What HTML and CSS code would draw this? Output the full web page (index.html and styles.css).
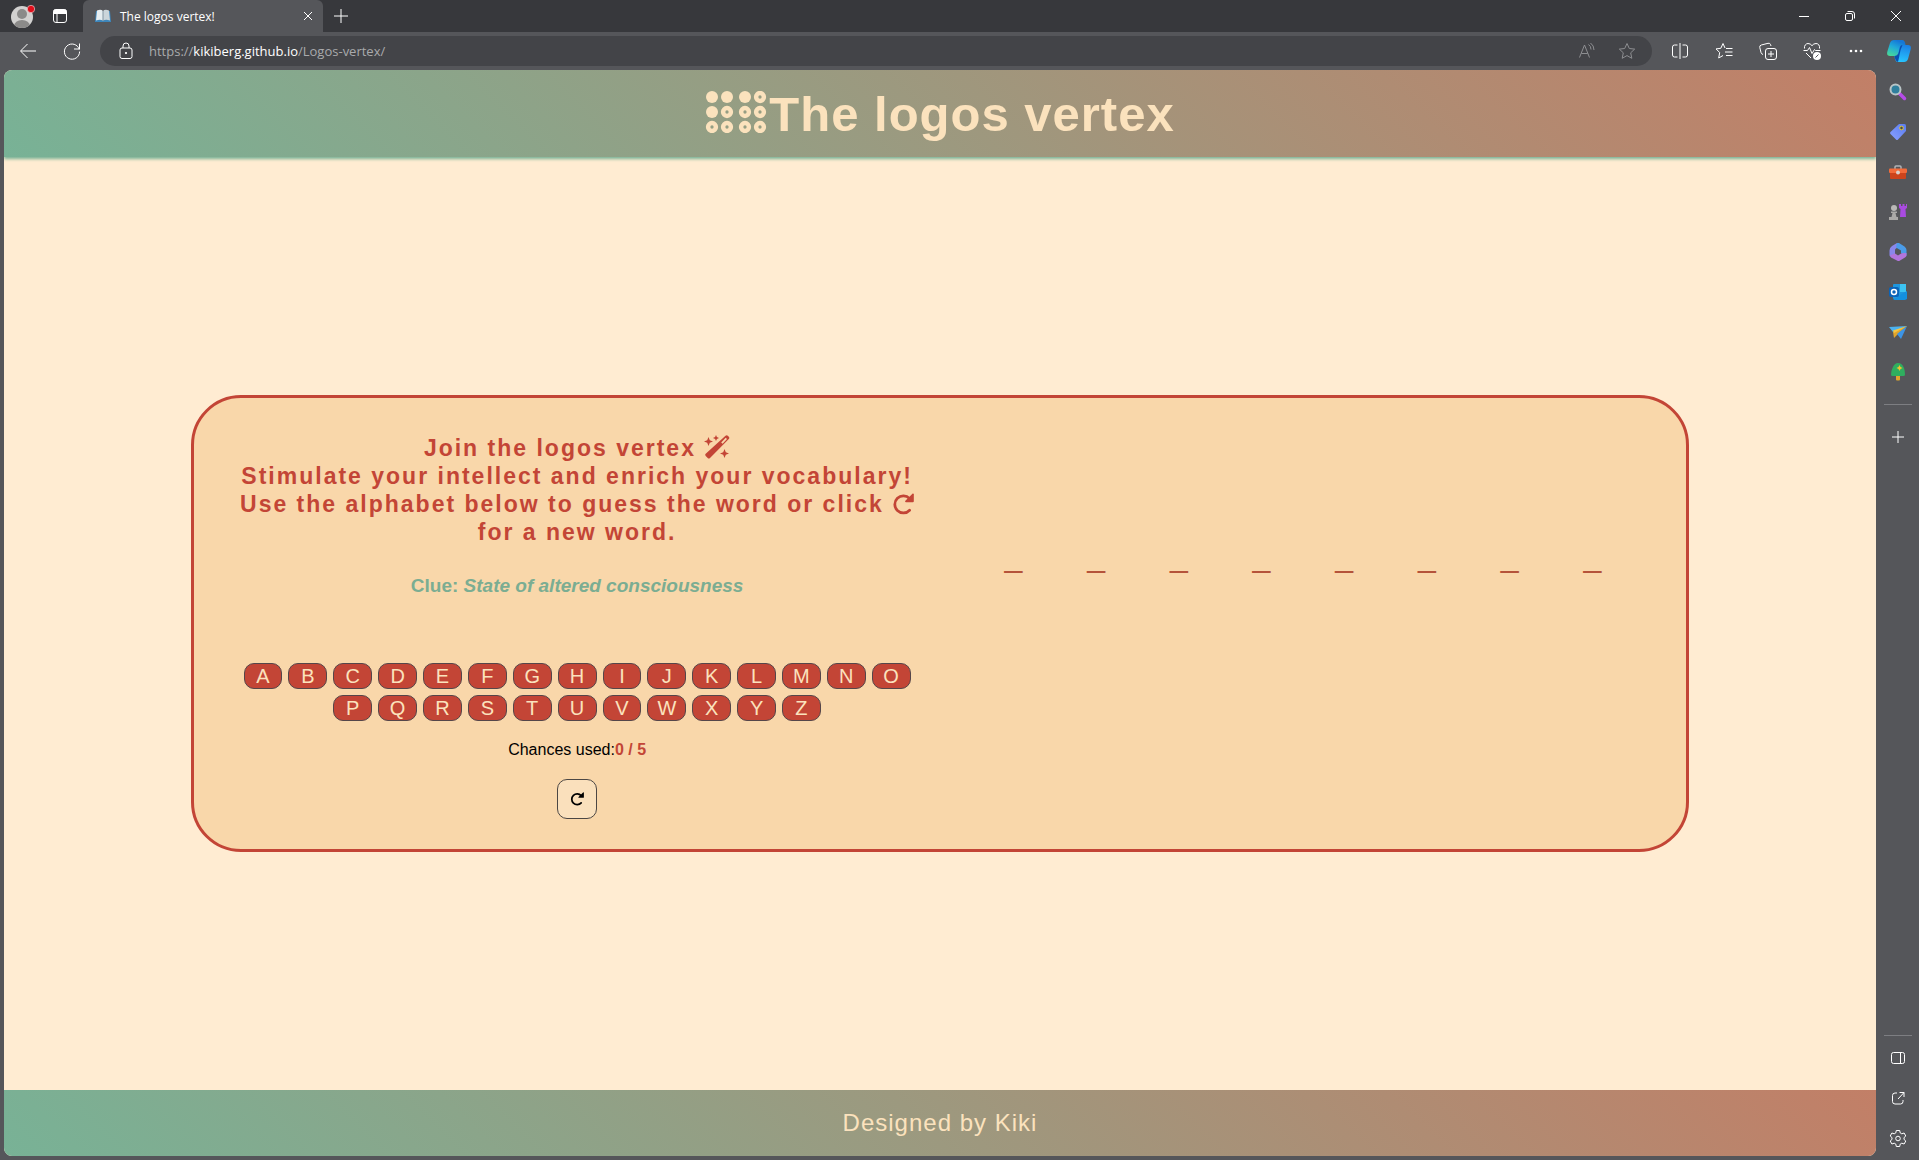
FILE: index.html
```html
<!DOCTYPE html>
<html lang="en">
<head>
<meta charset="utf-8">
<meta name="viewport" content="width=device-width, initial-scale=1">
<title>The logos vertex!</title>
<link rel="stylesheet" href="styles.css">
</head>
<body>
<svg class="defs" aria-hidden="true">
  <defs>
    <symbol id="rotate" viewBox="0 0 24 24">
      <path d="M19.2 6.200A9.300 9.300 0 1 0 19.200 18.800" fill="none" stroke="currentColor" stroke-width="3" stroke-linecap="round"/>
      <path d="M22.300 .8c.6-.6 1.500-.2 1.500.6v7.600c0 .6-.4 1-1 1h-7.600c-.9 0-1.200-.9-.6-1.500z" fill="currentColor"/>
    </symbol>
  </defs>
</svg>

<div class="tabbar">
  <button class="profile" aria-label="Profile">
    <svg width="26" height="26" viewBox="0 0 26 26"><defs><clipPath id="av"><circle cx="12" cy="14" r="11"/></clipPath></defs><circle cx="12" cy="14" r="11" fill="#d2d1d0"/><g clip-path="url(#av)" fill="#8b8a89"><circle cx="12" cy="11" r="5"/><ellipse cx="12" cy="23" rx="8" ry="6"/></g><circle cx="21" cy="6" r="3.700" fill="#e10f1b" stroke="#e8e4e4" stroke-width=".6"/></svg>
  </button>
  <button class="workspaces" aria-label="Tab actions">
    <svg class="line" width="16" height="16" viewBox="0 0 16 16"><rect x="1.500" y="1.500" width="13" height="13" rx="2.500"/><path d="M2 2h12v3.500H2z" fill="#fff"/><path d="M5 5v9"/></svg>
  </button>
  <div class="tab">
    <svg width="16" height="14" viewBox="0 0 16 14"><path d="M1 2h14l1 11H0z" fill="#3d86bb"/><path d="M2 1.500Q6 0 8 2v9.500Q5 10 1 11.500z" fill="#e6edf0"/><path d="M14 1.500Q10 0 8 2v9.500Q11 10 15 11.500z" fill="#cbd5da"/><path d="M8 2v10" stroke="#8194a0"/></svg>
    <span class="tab-title">The logos vertex!</span>
    <button aria-label="Close tab"><svg class="line" width="10" height="10" viewBox="0 0 10 10"><path d="M1 1l8 8M9 1L1 9"/></svg></button>
  </div>
  <button class="newtab" aria-label="New tab"><svg class="line" width="14" height="14" viewBox="0 0 14 14"><path d="M7 0v14M0 7h14"/></svg></button>
  <div class="window-controls">
    <button aria-label="Minimise"><svg class="line" width="10" height="10" viewBox="0 0 10 10"><path d="M0 5.500h10"/></svg></button>
    <button aria-label="Restore"><svg class="line" width="10" height="10" viewBox="0 0 10 10"><rect x=".5" y="2.500" width="7" height="7" rx="1.500"/><path d="M2.500 .5H7q2.500 0 2.500 2.500v4.500"/></svg></button>
    <button aria-label="Close"><svg class="line" width="10" height="10" viewBox="0 0 10 10"><path d="M0 0l10 10M10 0L0 10"/></svg></button>
  </div>
</div>

<div class="toolbar">
  <button aria-label="Back"><svg class="line" width="18" height="18" viewBox="0 0 18 18"><path d="M17 9H2M8.500 2L1.500 9l7 7"/></svg></button>
  <button aria-label="Refresh"><svg class="line" width="18" height="18" viewBox="0 0 18 18"><path d="M16.300 7.500A7.600 7.600 0 1 0 16.600 9.500M16.500 1.500v5.500h-5.500"/></svg></button>
  <div class="address">
    <svg class="line" width="14" height="18" viewBox="0 0 14 18"><rect x="1" y="6" width="12" height="10.500" rx="2"/><path d="M4 6V4a3 3 0 0 1 6 0v2"/><circle cx="7" cy="11" r=".7" fill="#fff"/></svg>
    <div class="url">https://<b>kikiberg.github.io</b>/Logos-vertex/</div>
    <button aria-label="Read aloud"><svg class="line dim" width="18" height="18" viewBox="0 0 18 18"><path d="M1.500 15.500L6.500 3l5 12.500M3.300 11.500h6.500M10.500 2.500q2.500 1.500 2.500 5M12.500 1q3.500 2.500 3.500 7"/></svg></button>
    <button aria-label="Add to favourites"><svg class="line dim" width="18" height="18" viewBox="0 0 18 18"><path d="M9 1.500l2.300 5 5.400.6-4 3.700 1.100 5.500L9 13.600l-4.800 2.700 1.100-5.500-4-3.700 5.400-.6z"/></svg></button>
  </div>
  <button aria-label="Split screen"><svg class="line" width="18" height="18" viewBox="0 0 18 18"><path d="M9 1v16M6.500 3H3.500q-2 0-2 2v8q0 2 2 2h3M11.500 3h3q2 0 2 2v8q0 2-2 2h-3"/></svg></button>
  <button aria-label="Favourites"><svg class="line" width="18" height="18" viewBox="0 0 18 18"><path d="M10 6L8 1.500 5.800 6.300l-4.800.6 3.700 3.600-1 5.500 4.300-2.500M11 6.500h6.500M10 10h7.500M11 13.500h6.500"/></svg></button>
  <button aria-label="Collections"><svg class="line" width="18" height="18" viewBox="0 0 18 18"><rect x="6.500" y="6.500" width="11" height="11" rx="2.500"/><path d="M12 9v6M9 12h6M4 12.500q-1.500-.4-2-2L.8 5.500Q.3 3.500 2.300 3L9 1.300q2-.5 2.600 1.400l.4 1.300"/></svg></button>
  <button aria-label="Browser essentials"><svg class="line" width="18" height="18" viewBox="0 0 18 18"><path d="M1.500 6.500C1 3.500 3 1.500 5 1.500q2.500 0 4 2.200 1.500-2.200 4-2.200c2.500 0 4 2.300 3.500 5M.5 8.500h4l2-3 2.500 6 2.500-4 1 1h5M3 11l5 5"/><circle cx="14" cy="14" r="4" fill="#fff" stroke="none"/><path d="M12.500 15.500l3-3" stroke="#55565a"/></svg></button>
  <button aria-label="Settings and more"><svg width="14" height="4" viewBox="0 0 14 4" fill="#fff"><circle cx="2" cy="2" r="1.300"/><circle cx="7" cy="2" r="1.300"/><circle cx="12" cy="2" r="1.300"/></svg></button>
  <button class="copilot" aria-label="Copilot"><svg width="24" height="24" viewBox="0 0 24 24"><defs><linearGradient id="c1" x1="0" y1="1" x2=".5" y2="0"><stop offset="0" stop-color="#4ee08f"/><stop offset=".6" stop-color="#20a9d8"/><stop offset="1" stop-color="#1577d8"/></linearGradient><linearGradient id="c2" x1=".5" y1="1" x2=".7" y2="0"><stop offset="0" stop-color="#27c4ff"/><stop offset="1" stop-color="#1b7fe4"/></linearGradient></defs><path d="M7 1h8q3 0 3.500 5H15l-4 9q-.5 2-3 2H3q-4 0-2.500-5L3 4q1-3 4-3z" fill="url(#c1)"/><path d="M15 6h6q4 0 2.500 5L21 20q-1 3-4 3h-6q-3 0-3.500-6l3-.5 2-8Q13 6 15 6z" fill="url(#c2)"/><path d="M7.500 17q3 0 4-3l1.500-6q.5-2 2.500-2-2 4-3 10-.5 3-1.500 7-3-1-3.500-6z" fill="#0b4fae"/></svg></button>
</div>

<div class="viewport">
  <div class="page">
    <header class="site-header">
      <svg class="braille" width="64" height="42" viewBox="0 0 64 42"><g fill="#fbe2bd"><circle cx="7" cy="6" r="6"/><circle cx="22" cy="6" r="6"/><circle cx="7" cy="21" r="6"/><circle cx="40" cy="6" r="6"/></g><g fill="none" stroke="#fbe2bd" stroke-width="4.500"><circle cx="55" cy="6" r="3.900"/><circle cx="22" cy="21" r="3.900"/><circle cx="40" cy="21" r="3.900"/><circle cx="55" cy="21" r="3.900"/><circle cx="7" cy="36" r="3.900"/><circle cx="22" cy="36" r="3.900"/><circle cx="40" cy="36" r="3.900"/><circle cx="55" cy="36" r="3.900"/></g></svg>
      <h1>The logos vertex</h1>
    </header>

    <main>
      <section class="game">
        <div class="panel">
          <h2>Join the logos vertex
            <svg class="wand" width="26" height="24" viewBox="0 0 26 24" fill="currentColor"><path fill-rule="evenodd" d="M21.500.8q1.200-1 2.300 0l1 1q1 1.200 0 2.300L6 23q-1.200 1-2.300 0l-2-2q-1-1.200 0-2.300zM17.200 7.400l1.400 1.400 4.400-4.700-1.300-1.400z"/><path d="M4.500 2l1.300 3.200L9 6.500 5.800 7.800 4.500 11 3.200 7.800 0 6.500l3.200-1.300zM12 0l.9 2.100 2.100.9-2.100.9L12 6l-.9-2.100L9 3l2.100-.9zM20.500 14l1.300 3.200 3.200 1.300-3.200 1.300-1.300 3.200-1.300-3.200-3.200-1.300 3.200-1.300z"/></svg><br>
            Stimulate your intellect and enrich your vocabulary!<br>
            Use the alphabet below to guess the word or click
            <svg class="turn" width="22" height="22"><use href="#rotate"/></svg>
            for a new word.</h2>
          <h3>Clue: <i>State of altered consciousness</i></h3>
          <div class="letters">
            <button>A</button><button>B</button><button>C</button><button>D</button><button>E</button>
            <button>F</button><button>G</button><button>H</button><button>I</button><button>J</button>
            <button>K</button><button>L</button><button>M</button><button>N</button><button>O</button>
            <button class="row-start">P</button><button>Q</button><button>R</button><button>S</button><button>T</button>
            <button>U</button><button>V</button><button>W</button><button>X</button><button>Y</button>
            <button>Z</button>
          </div>
          <p class="chances">Chances used:<b>0 / 5</b></p>
          <button class="refresh" aria-label="New word"><svg width="14" height="14"><use href="#rotate"/></svg></button>
        </div>
        <div class="word">
          <span>_</span><span>_</span><span>_</span><span>_</span><span>_</span><span>_</span><span>_</span><span>_</span>
        </div>
      </section>
    </main>

    <footer class="site-footer">Designed by Kiki</footer>
  </div>

  <aside class="sidebar">
    <button aria-label="Search"><svg width="18" height="18" viewBox="0 0 18 18"><path d="M10.500 10.500l5 5" stroke="#b54be8" stroke-width="3.500" stroke-linecap="round"/><circle cx="6.500" cy="6.500" r="5" fill="#2f7f9d" stroke="#b9c4c6" stroke-width="2"/></svg></button>
    <button aria-label="Shopping"><svg width="18" height="18" viewBox="0 0 18 18"><defs><linearGradient id="tg" x1="1" y1="0" x2="0" y2="1"><stop offset="0" stop-color="#5a7df0"/><stop offset="1" stop-color="#8aa0ff"/></linearGradient></defs><path d="M10 1h5.500q1.500 0 1.500 1.500v5.500L9 16.500q-1 1-2 0L1.500 11q-1-1 0-2z" fill="url(#tg)"/><circle cx="12.500" cy="5" r="1.800" fill="#3d4a58" stroke="#e9c62a"/></svg></button>
    <button aria-label="Tools"><svg width="18" height="18" viewBox="0 0 18 18"><path d="M6 6V4q0-1 1-1h4q1 0 1 1v2" fill="none" stroke="#b0b3b6" stroke-width="1.500"/><rect x="0" y="5.500" width="18" height="4.500" rx="1" fill="#f26b3a"/><path d="M1 10h16v5q0 1-1 1H2q-1 0-1-1z" fill="#cc441c"/><circle cx="9" cy="9.500" r="2" fill="#d9d2cd"/></svg></button>
    <button aria-label="Games"><svg width="18" height="18" viewBox="0 0 18 18"><path d="M10 1h2v2h1.500V1h2v2H17V1h1v4l-1.500 1 .5 8h-6l.5-8L10 5z" fill="#a94be0"/><circle cx="5" cy="5" r="3" fill="#b9b8b6"/><path d="M2 8.500h6v1.500H6.500l1 4h1.500V17H0v-3h2.500l1-4H2z" fill="#aaa9a7"/></svg></button>
    <button aria-label="Microsoft 365"><svg width="18" height="18" viewBox="0 0 18 18"><path d="M8 0L3 3Q.5 4.500.5 7.500V12q0 1 1 1.500L6 11V7q0-1 1-1.500L12 2.500z" fill="#8a86ea"/><path d="M8 0q1-.5 2 0l5.500 3.500Q17.500 5 17.500 7v6L12 10V7.500L7 4.500z" fill="#4b9ce8"/><path d="M.8 12.500L6 10.500l3 2 3.500-2.200 5-.3v2q0 1.500-1.500 2.500l-5 3q-1.500 1-3 0L2 14.500z" fill="#b275dc"/></svg></button>
    <button aria-label="Outlook"><svg width="18" height="18" viewBox="0 0 18 18"><rect x="4" y="1" width="13" height="15" rx="1" fill="#1f97de"/><path d="M11 1h6v8h-6z" fill="#3cc3f2"/><path d="M4 17h12l2-1V8l-7 4z" fill="#1490df"/><rect x="0" y="4" width="10" height="10" rx="2" fill="#0a63b8"/><circle cx="5" cy="9" r="2.500" fill="none" stroke="#fff" stroke-width="1.500"/></svg></button>
    <button aria-label="Drop"><svg width="18" height="18" viewBox="0 0 18 18"><path d="M0 4L18 3 4 9z" fill="#4cb2ef"/><path d="M18 3L4 9l1 6 4-4z" fill="#e0a52c"/><path d="M18 3l-6 13-4-5z" fill="#3c94e6"/><path d="M18 3L4 7.500 5 10z" fill="#f4c544"/></svg></button>
    <button aria-label="Tree"><svg width="18" height="18" viewBox="0 0 18 18"><rect x="7" y="12" width="4" height="5.500" rx="1" fill="#e0a52c"/><path d="M9 0q4 0 6 5 1 3 1 6.500 0 1.500-1.500 1.500h-11Q2 13 2 11.500 2 8 3.500 5 5.500 0 9 0z" fill="#2fae5f"/><path d="M10.500 2l1 2 2 1-2 1-1 2-1-2-2-1 2-1z" fill="#f2c431"/></svg></button>
    <hr>
    <button class="add" aria-label="Customise"><svg class="line" width="12" height="12" viewBox="0 0 12 12"><path d="M6 0v12M0 6h12"/></svg></button>
    <div class="spacer"></div>
    <hr>
    <button aria-label="Hide sidebar"><svg class="line" width="16" height="16" viewBox="0 0 16 16"><rect x="1.500" y="2.500" width="13" height="11" rx="2"/><path d="M10.500 2.500v11"/></svg></button>
    <button aria-label="Open link"><svg class="line" width="16" height="16" viewBox="0 0 16 16"><path d="M7 3H5Q2.500 3 2.500 5.500v6Q2.500 14 5 14h5.500q2.500 0 2.500-2.500V10M8 9l6-6.500M9.500 2.500h4.500V7"/></svg></button>
    <button aria-label="Settings"><svg class="line" width="18" height="18" viewBox="0 0 18 18"><path d="M7.300 1.500h3.400l.5 2.400 1.600.9 2.300-.8 1.700 3-1.800 1.600v1.800l1.800 1.600-1.700 3-2.300-.8-1.600.9-.5 2.400H7.300l-.5-2.400-1.600-.9-2.300.8-1.700-3L3 10.400V8.600L1.200 7l1.700-3 2.300.8 1.600-.9z"/><circle cx="9" cy="9.500" r="2.300"/></svg></button>
  </aside>
</div>
</body>
</html>
```
FILE: styles.css
```css
* {
  box-sizing: border-box;
}

:root {
  --frame: #55565a;
  --red: #c34536;
  --cream: #fbe2bd;
  --green: #78b296;
  --gradient: linear-gradient(45deg, #78b296, #c27f67);
}

body {
  display: flex;
  flex-direction: column;
  min-height: 100vh;
  margin: 0;
  background: var(--frame);
  font-family: "Liberation Sans", Arial, sans-serif;
}

button {
  display: flex;
  align-items: center;
  justify-content: center;
  padding: 0;
  border: 0;
  background: none;
  color: inherit;
  font: inherit;
}

.defs {
  position: absolute;
  width: 0;
  height: 0;
}

.line {
  fill: none;
  stroke: #fff;
}

.dim {
  stroke: #8d8e91;
}

/* Browser frame */
.tabbar {
  display: flex;
  height: 32px;
  background: #37383c;
  color: #fff;
  font-family: "Open Sans", "Noto Sans", sans-serif;
  font-size: 12px;
}

.profile {
  width: 46px;
}

.workspaces {
  width: 28px;
}

.tab {
  display: flex;
  align-items: center;
  gap: 9px;
  width: 240px;
  margin-left: 9px;
  padding: 0 10px 0 12px;
  border-radius: 6px 6px 0 0;
  background: var(--frame);
}

.tab-title {
  flex: 1;
}

.newtab {
  width: 36px;
}

.window-controls {
  display: flex;
  margin-left: auto;
}

.window-controls button {
  width: 46px;
}

.toolbar {
  display: flex;
  align-items: center;
  height: 38px;
  padding-left: 6px;
}

.toolbar button {
  width: 44px;
  height: 30px;
}

.toolbar .copilot {
  width: 41px;
}

.address {
  display: flex;
  flex: 1;
  align-items: center;
  height: 30px;
  margin: 0 6px;
  padding: 0 5px 0 19px;
  border-radius: 15px;
  background: #434448;
}

.address button {
  width: 40px;
}

.url {
  flex: 1;
  margin-left: 16px;
  color: #a9aaac;
  font: 13px "Open Sans", "Noto Sans", sans-serif;
}

.url b {
  color: #fff;
  font-weight: 400;
}

.viewport {
  display: flex;
  flex: 1;
  padding-left: 4px;
}

.sidebar {
  display: flex;
  flex-direction: column;
  align-items: center;
  width: 43px;
  padding: 2px 0;
}

.sidebar button {
  width: 40px;
  height: 40px;
}

.sidebar hr {
  width: 28px;
  margin: 12px 0 2px;
  border: 0;
  border-top: 1px solid #7d7e82;
}

.sidebar .add {
  margin-top: 10px;
}

.spacer {
  flex: 1;
}

/* Web page */
.page {
  display: flex;
  flex: 1;
  flex-direction: column;
  margin-bottom: 4px;
  overflow: hidden;
  border-radius: 8px;
  background: #ffecd2;
}

.site-header {
  display: flex;
  align-items: center;
  justify-content: center;
  height: 87px;
  background: var(--gradient);
  box-shadow: 0 2px 3px var(--green);
  color: var(--cream);
}

.braille {
  margin-bottom: 4px;
}

h1 {
  margin: 0;
  font-size: 49px;
  letter-spacing: 1px;
}

main {
  display: flex;
  flex: 1;
  align-items: center;
  justify-content: center;
}

.game {
  display: grid;
  grid-template-columns: 1fr 1fr;
  gap: 40px;
  align-items: center;
  width: 80%;
  padding: 36px 40px 30px;
  border: 3px solid var(--red);
  border-radius: 50px;
  background: #f9d7aa;
}

.panel {
  display: flex;
  flex-direction: column;
  align-items: center;
  text-align: center;
}

h2 {
  margin: 0;
  color: var(--red);
  font-size: 23px;
  line-height: 28px;
  letter-spacing: 2px;
}

.wand,
.turn {
  vertical-align: -3px;
}

h3 {
  margin: 28px 0 66px;
  color: #7bad92;
  font-size: 19px;
  line-height: 23px;
}

.letters {
  display: grid;
  grid-template-columns: repeat(15, 1fr);
  gap: 6px;
  width: 100%;
  max-width: 667px;
}

.letters button {
  height: 26px;
  border: 1px solid #55464a;
  border-radius: 10px;
  background: var(--red);
  color: var(--cream);
  font-size: 20px;
}

.letters .row-start {
  grid-column-start: 3;
}

.chances {
  margin: 20px 0;
  font-size: 16px;
  line-height: 18px;
}

.chances b {
  color: var(--red);
}

.refresh {
  width: 40px;
  height: 40px;
  border: 1px solid #4c4744;
  border-radius: 10px;
  background: #fae0bc;
  color: #000;
}

.word {
  display: flex;
  justify-content: space-around;
  padding: 0 12px 140px;
  color: #b5533a;
  font-size: 32px;
}

.site-footer {
  display: flex;
  align-items: center;
  justify-content: center;
  height: 66px;
  background: var(--gradient);
  color: var(--cream);
  font-size: 24px;
  letter-spacing: 1px;
}
```
